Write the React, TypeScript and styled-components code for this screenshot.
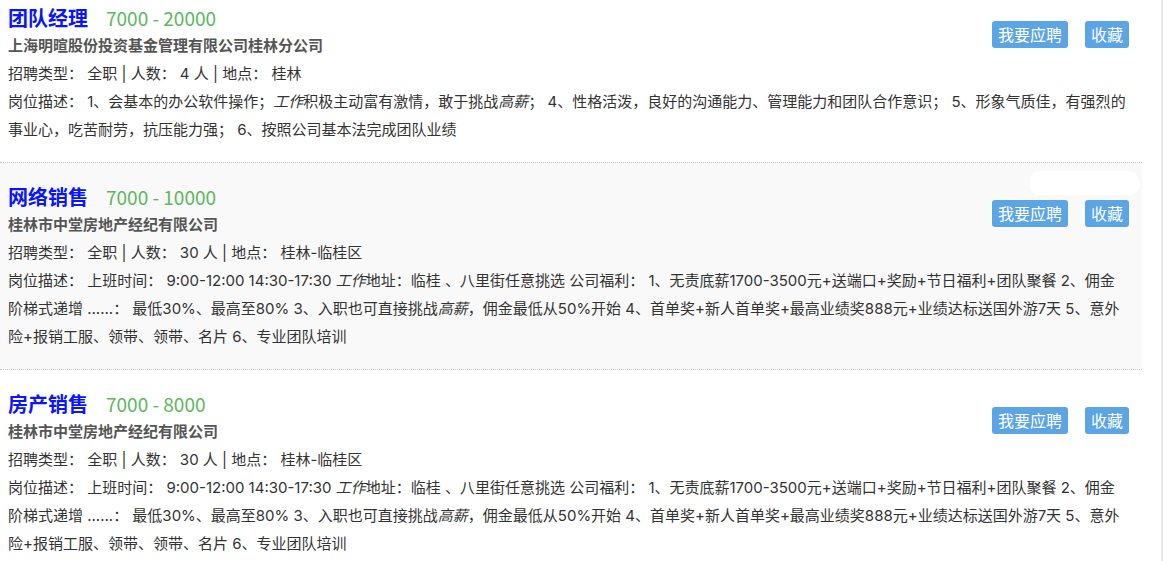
import React from 'react';
import styled, { createGlobalStyle } from 'styled-components';

const GlobalStyle = createGlobalStyle`
  html, body {
    margin: 0;
    padding: 0;
    background: #ffffff;
    overflow: hidden;
  }
  body {
    font-family: Inter, 'Noto Sans CJK SC', sans-serif;
  }
`;

const Page = styled.div`
  width: 1161px;
  height: 561px;
  border-right: 2px solid #e8e8e8;
  overflow: hidden;
`;

const JobList = styled.ul`
  list-style: none;
  margin: -16px 0 0;
  padding: 0;
  width: 1142px;
`;

const JobItem = styled.li<{ $shaded?: boolean }>`
  padding: 20px 13px 18px 8px;
  background: ${({ $shaded }) => ($shaded ? '#f9f9f9' : '#ffffff')};
  border-bottom: 1px dotted #c8c8c8;
  position: relative;

  &:last-child {
    border-bottom: none;
  }
`;

const Actions = styled.div`
  float: right;
  display: flex;
  gap: 17px;
  margin-top: 17px;
`;

const ActionButton = styled.button`
  height: 27px;
  padding: 0 6px;
  border: none;
  border-radius: 3px;
  background: #5ca5e4;
  color: #ffffff;
  font-family: 'Noto Sans CJK SC', sans-serif;
  font-size: 16px;
  line-height: 27px;
  cursor: pointer;
`;

const TitleRow = styled.div`
  display: flex;
  align-items: baseline;
  gap: 18px;
  height: 28px;
  line-height: 28px;
`;

const JobTitle = styled.a`
  color: #0a14ff;
  font-family: 'Noto Sans CJK SC', sans-serif;
  font-size: 20px;
  font-weight: bold;
  text-decoration: none;
`;

const Salary = styled.span`
  color: #5cb85c;
  font-family: 'Noto Sans CJK SC', sans-serif;
  font-size: 19px;
`;

const Company = styled.div`
  color: #555555;
  font-size: 15px;
  font-weight: bold;
  line-height: 28px;
`;

const InfoLine = styled.p`
  margin: 0;
  color: #333333;
  font-size: 15px;
  line-height: 28px;
`;

const Whiteout = styled.div`
  position: absolute;
  right: 2px;
  top: 8px;
  width: 110px;
  height: 24px;
  background: #ffffff;
  border-radius: 14px 20px 16px 12px;
`;

type Job = {
  title: string;
  salary: string;
  company: string;
  info: string;
  desc: React.ReactNode;
};

const saleDesc = (
  <>
    岗位描述： 上班时间： 9:00-12:00 14:30-17:30 <em>工作</em>地址：临桂 、八里街任意挑选 公司福利： 1、无责底薪1700-3500元+送端口+奖励+节日福利+团队聚餐 2、佣金阶梯式递增 ......： 最低30%、最高至80% 3、入职也可直接挑战<em>高薪</em>，佣金最低从50%开始 4、首单奖+新人首单奖+最高业绩奖888元+业绩达标送国外游7天 5、意外险+报销工服、领带、领带、名片 6、专业团队培训
  </>
);

const jobs: Job[] = [
  {
    title: '团队经理',
    salary: '7000 - 20000',
    company: '上海明暄股份投资基金管理有限公司桂林分公司',
    info: '招聘类型： 全职 | 人数： 4 人 | 地点： 桂林',
    desc: (
      <>
        岗位描述： 1、会基本的办公软件操作；<em>工作</em>积极主动富有激情，敢于挑战<em>高薪</em>； 4、性格活泼，良好的沟通能力、管理能力和团队合作意识； 5、形象气质佳，有强烈的事业心，吃苦耐劳，抗压能力强； 6、按照公司基本法完成团队业绩
      </>
    ),
  },
  {
    title: '网络销售',
    salary: '7000 - 10000',
    company: '桂林市中堂房地产经纪有限公司',
    info: '招聘类型： 全职 | 人数： 30 人 | 地点： 桂林-临桂区',
    desc: saleDesc,
  },
  {
    title: '房产销售',
    salary: '7000 - 8000',
    company: '桂林市中堂房地产经纪有限公司',
    info: '招聘类型： 全职 | 人数： 30 人 | 地点： 桂林-临桂区',
    desc: saleDesc,
  },
];

export default function App() {
  return (
    <>
      <GlobalStyle />
      <Page>
        <JobList>
          {jobs.map((job, i) => (
            <JobItem key={i} $shaded={i === 1}>
              {i === 1 && <Whiteout />}
              <Actions>
                <ActionButton>我要应聘</ActionButton>
                <ActionButton>收藏</ActionButton>
              </Actions>
              <TitleRow>
                <JobTitle href="#">{job.title}</JobTitle>
                <Salary>{job.salary}</Salary>
              </TitleRow>
              <Company>{job.company}</Company>
              <InfoLine>{job.info}</InfoLine>
              <InfoLine>{job.desc}</InfoLine>
            </JobItem>
          ))}
        </JobList>
      </Page>
    </>
  );
}
